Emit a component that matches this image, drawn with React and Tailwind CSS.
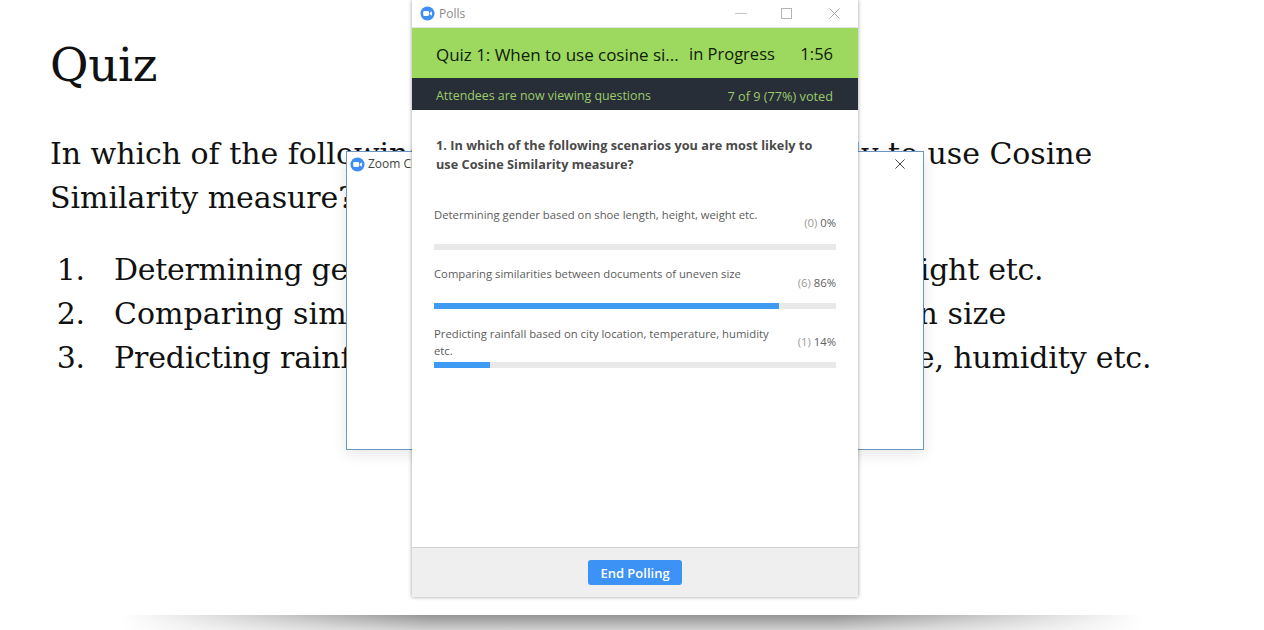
import React from 'react';

const slideFont = "font-['DejaVu_Serif','Liberation_Serif',serif]";
const uiFont = "font-['Open_Sans','Noto_Sans',sans-serif]";

const items = [
    { text: 'Determining gender based on shoe length, height, weight etc.', tracking: 'tracking-[-0.28px]' },
    { text: 'Comparing similarities between documents of uneven size', tracking: 'tracking-[0.05px]' },
    { text: 'Predicting rainfall based on city location, temperature, humidity etc.', tracking: 'tracking-[-0.15px]' },
];

const results = [
    { label: 'Determining gender based on shoe length, height, weight etc.', count: '(0)', pct: '0%', fill: 'w-0', box: 'h-[38px]', top: 'pt-[16px]', pctTop: 'pt-[8px]' },
    { label: 'Comparing similarities between documents of uneven size', count: '(6)', pct: '86%', fill: 'w-[345px]', box: 'h-[38px]', top: 'pt-[15px]', pctTop: 'pt-[9px]' },
    { label: 'Predicting rainfall based on city location, temperature, humidity etc.', count: '(1)', pct: '14%', fill: 'w-[56px]', box: 'h-[37px]', top: 'pt-[16px]', pctTop: 'pt-[8px]' },
];

const ZoomLogo = ({ className }) => (
    <svg viewBox="0 0 16 16" className={className}>
        <circle cx="8" cy="8" r="7.5" fill="#3f8ef5" />
        <rect x="3.4" y="5.4" width="6.2" height="5.2" rx="1.2" fill="#fff" />
        <path d="M10.2 7.4 12.7 5.6v4.8L10.2 8.6z" fill="#fff" />
    </svg>
);

const CloseIcon = ({ className }) => (
    <svg viewBox="0 0 11 11" className={className} fill="none" stroke="currentColor" strokeWidth="1">
        <path d="M.5.5l10 10M10.5.5l-10 10" />
    </svg>
);

const ResultRow = ({ row }) => (
    <div className={row.top}>
        <div className={`flex items-start justify-between ${row.box}`}>
            <p className="w-[345px] text-[11.3px] leading-[17px] text-[#5c5c5c]">{row.label}</p>
            <p className={`text-[11.3px] leading-[17px] text-[#606060] ${row.pctTop}`}>
                <span className="text-[#9a9a9a]">{row.count}</span> {row.pct}
            </p>
        </div>
        <div className="h-[6px] w-[402px] bg-[#e9e9e9]">
            <div className={`h-full bg-[#3f9bf2] ${row.fill}`} />
        </div>
    </div>
);

const App = () => {
    return (
        <div className="relative h-[630px] w-[1264px] overflow-hidden bg-white">
            <div className={`h-[615px] px-[50px] pt-[32px] text-[#111] ${slideFont}`}>
                <h1 className="text-[47px] leading-[66px] tracking-[-0.4px]">Quiz</h1>
                <p className="mt-[34px] w-[1080px] text-[30px] leading-[44px] tracking-[-0.04px]">
                    In which of the following scenarios you are most likely to use Cosine Similarity measure?
                </p>
                <ol className="mt-[28px] text-[30px] leading-[44px]">
                    {items.map((item, i) => (
                        <li key={item.text} className="flex">
                            <span className="mr-[29px] w-[35px] text-right tracking-[-0.15px]">{i + 1}.</span>
                            <span className={`whitespace-nowrap ${item.tracking}`}>{item.text}</span>
                        </li>
                    ))}
                </ol>
            </div>
            <div className="mx-auto h-[15px] w-[1020px] bg-[linear-gradient(to_bottom,#959595,#d0d0d0)] [mask-image:linear-gradient(to_right,transparent,#000_30%,#000_70%,transparent)]" />

            {/* window behind the polls */}
            <div className={`absolute left-[346px] top-[151px] h-[299px] w-[578px] border border-[#6d97c2] bg-white shadow-[0_4px_14px_rgba(0,0,0,0.1)] ${uiFont}`}>
                <div className="flex h-[24px] items-center justify-between pl-[3px] pr-[18px]">
                    <div className="flex items-center gap-[3px]">
                        <ZoomLogo className="size-[15px]" />
                        <span className="text-[12px] text-[#444]">Zoom Cloud Meetings</span>
                    </div>
                    <CloseIcon className="size-[10px] text-[#333]" />
                </div>
            </div>

            {/* polls window */}
            <div className={`absolute left-[412px] top-0 flex h-[597px] w-[446px] flex-col bg-white shadow-[0_0_4px_rgba(0,0,0,0.4)] ${uiFont}`}>
                <div className="flex h-[28px] shrink-0 items-center border-b border-[#e4e4e4] pl-[8px] pr-[18px]">
                    <ZoomLogo className="size-[15px]" />
                    <span className="ml-[4px] text-[12px] text-[#8a8a8a]">Polls</span>
                    <div className="ml-auto h-px w-[12px] bg-[#c4c4c4]" />
                    <div className="ml-[34px] size-[11px] border border-[#b4b4b4]" />
                    <CloseIcon className="ml-[37px] size-[11px] text-[#aaa]" />
                </div>
                <div className="flex h-[50px] shrink-0 items-center bg-[#9dd95f] pl-[24px] pr-[25px] pt-[3px] text-[16.5px] text-[#10200a]">
                    <span className="w-[253px] whitespace-nowrap text-[17px] tracking-[-0.03px]">Quiz 1: When to use cosine si...</span>
                    <span>in Progress</span>
                    <span className="ml-auto">1:56</span>
                </div>
                <div className="flex h-[32px] shrink-0 items-center justify-between bg-[#272e38] pl-[24px] pr-[25px] pt-[5px] text-[12.4px] text-[#9ccb6a]">
                    <span>Attendees are now viewing questions</span>
                    <span className="text-[12.7px]">7 of 9 (77%) voted</span>
                </div>
                <div className="flex-1 px-[22px] pt-[26px]">
                    <p className="ml-[2px] w-[385px] text-[12.7px] font-bold leading-[18.5px] tracking-[0.03px] text-[#4a4a4a]">
                        1. In which of the following scenarios you are most likely to use Cosine Similarity measure?
                    </p>
                    <div className="mt-[17px]">
                        {results.map((row) => (
                            <ResultRow key={row.label} row={row} />
                        ))}
                    </div>
                </div>
                <div className="flex h-[50px] shrink-0 items-center justify-center border-t border-[#d0d0d0] bg-[#efefef]">
                    <button className="h-[25px] w-[94px] rounded-[3px] bg-[#3d92f5] pt-[3px] text-[13px] font-semibold text-white">End Polling</button>
                </div>
            </div>
        </div>
    );
};

export default App;
